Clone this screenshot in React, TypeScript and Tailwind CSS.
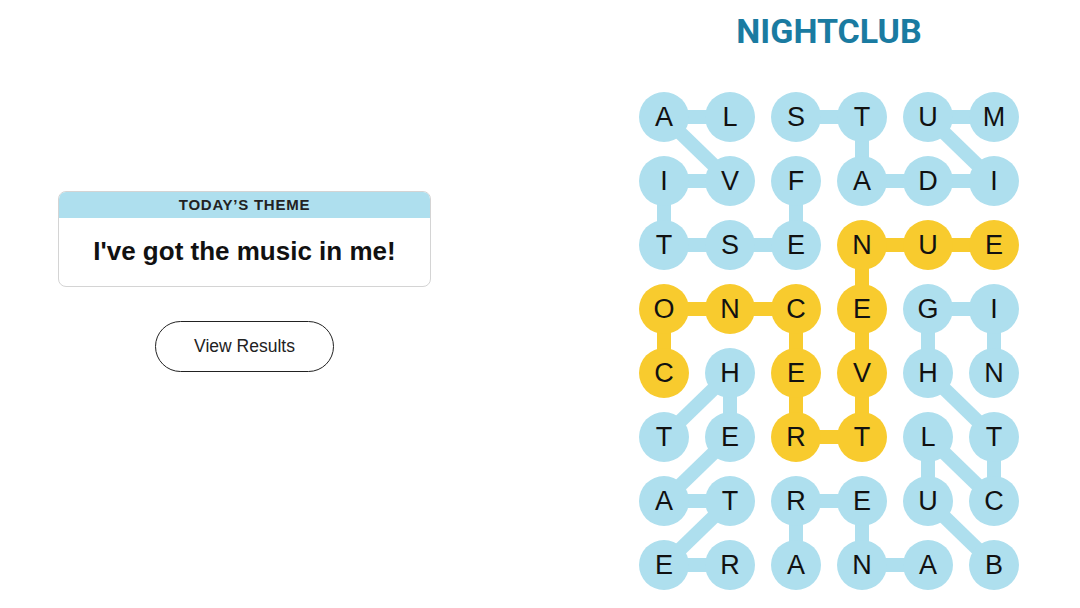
import React from "react";

const GRID = [
  "ALSTUM",
  "IVFADI",
  "TSENUE",
  "ONCEGI",
  "CHEVHN",
  "TERTLT",
  "ATREUC",
  "ERANAB",
];

const BLUE = "#aedfee";
const YELLOW = "#f8cb2e";

type P = [number, number];

const blueWords: P[][] = [
  // FESTIVAL
  [[1, 2], [2, 2], [2, 1], [2, 0], [1, 0], [1, 1], [0, 0], [0, 1]],
  // STADIUM
  [[0, 2], [0, 3], [1, 3], [1, 4], [1, 5], [0, 4], [0, 5]],
  // NIGHTCLUB
  [[4, 5], [3, 5], [3, 4], [4, 4], [5, 5], [6, 5], [5, 4], [6, 4], [7, 5]],
  // THEATER
  [[5, 0], [4, 1], [5, 1], [6, 0], [6, 1], [7, 0], [7, 1]],
  // ARENA
  [[7, 2], [6, 2], [6, 3], [7, 3], [7, 4]],
];

const span: P[] = [
  [4, 0], [3, 0], [3, 1], [3, 2], [4, 2], [5, 2], [5, 3], [4, 3], [3, 3], [2, 3], [2, 4], [2, 5],
];

const yellowSet = new Set(span.map(([r, c]) => `${r}-${c}`));

const cx = (c: number) => 25 + 66 * c;
const cy = (r: number) => 25 + 64 * r;

function Path({ pts, color }: { pts: P[]; color: string }) {
  const lines = [];
  for (let i = 0; i < pts.length - 1; i++) {
    const [r1, c1] = pts[i];
    const [r2, c2] = pts[i + 1];
    lines.push(
      <line
        key={i}
        x1={cx(c1)}
        y1={cy(r1)}
        x2={cx(c2)}
        y2={cy(r2)}
        stroke={color}
        strokeWidth={14}
      />
    );
  }
  return <g>{lines}</g>;
}

export default function App() {
  return (
    <div
      className="w-[1080px] h-[608px] bg-white flex overflow-hidden"
      style={{ fontFamily: "'Liberation Sans', Arial, sans-serif" }}
    >
      <div className="w-[373px] ml-[58px] flex flex-col items-center pt-[191px]">
        <div className="w-full rounded-lg border border-[#d4d4d4] overflow-hidden">
          <div className="h-[26px] bg-[#aedfee] flex items-center justify-center text-[15px] font-bold tracking-[0.05em] text-[#222]">
            TODAY’S THEME
          </div>
          <div className="h-[68px] flex items-center justify-center text-[26px] font-bold text-[#111] pb-[2px]">
            I've got the music in me!
          </div>
        </div>
        <button className="mt-[34px] w-[179px] h-[51px] rounded-full border border-[#222] text-[17.5px] text-[#222] bg-white flex items-center justify-center">
          View Results
        </button>
      </div>
      <div className="ml-[208px] w-[380px] flex flex-col items-center">
        <div
          className="mt-[13px] h-[36px] leading-[36px] text-[34px] font-bold text-[#1a7ba1]"
          style={{ fontFamily: "Roboto, 'Liberation Sans', sans-serif" }}
        >
          NIGHTCLUB
        </div>
        <div className="relative mt-[43px] w-[380px] h-[498px]">
          <svg className="absolute inset-0" width="380" height="498">
            {blueWords.map((w, i) => (
              <Path key={i} pts={w} color={BLUE} />
            ))}
            <Path pts={span} color={YELLOW} />
          </svg>
          <div className="relative grid grid-cols-6 gap-x-[16px] gap-y-[14px]">
            {GRID.map((row, r) =>
              row.split("").map((ch, c) => (
                <div
                  key={`${r}-${c}`}
                  className={`w-[50px] h-[50px] rounded-full flex items-center justify-center text-[27px] text-[#111] ${
                    yellowSet.has(`${r}-${c}`) ? "bg-[#f8cb2e]" : "bg-[#aedfee]"
                  }`}
                >
                  {ch}
                </div>
              ))
            )}
          </div>
        </div>
      </div>
    </div>
  );
}
